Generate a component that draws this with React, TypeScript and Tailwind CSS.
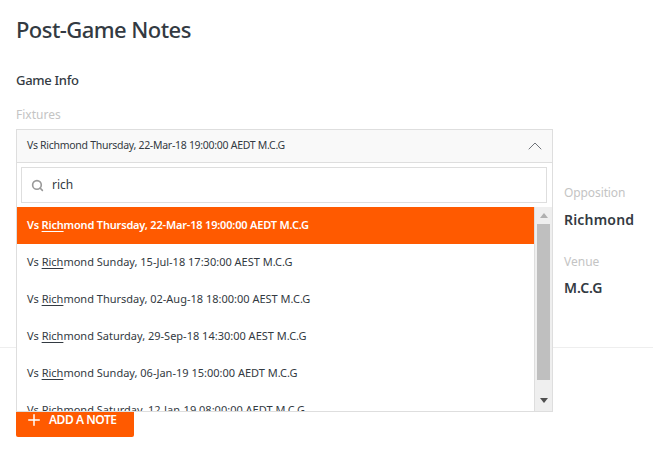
import React from 'react'
import { ChevronUp, Search, Plus } from 'lucide-react'

const fixtures = [
  ' Thursday, 22-Mar-18 19:00:00 AEDT M.C.G',
  ' Sunday, 15-Jul-18 17:30:00 AEST M.C.G',
  ' Thursday, 02-Aug-18 18:00:00 AEST M.C.G',
  ' Saturday, 29-Sep-18 14:30:00 AEST M.C.G',
  ' Sunday, 06-Jan-19 15:00:00 AEDT M.C.G',
  ' Saturday, 12-Jan-19 08:00:00 AEDT M.C.G',
]

const App: React.FC = () => {
  return (
    <div className="w-[653px] h-[455px] overflow-hidden bg-white font-['Noto_Sans',sans-serif] text-[#333a42]">
      <div className="px-4 pt-[13px]">
        <h1 className="text-[22px] leading-[32px] font-medium tracking-[-0.55px]">Post-Game Notes</h1>
        <h2 className="mt-[26px] text-[13px] leading-[18px] font-medium tracking-[-0.3px]">Game Info</h2>
        <div className="mt-[18px] text-[12px] leading-[16px] text-[#c4c4c4]">Fixtures</div>

        <div className="relative mt-[6px] flex">
          <div className="w-[537px] shrink-0">
            <div className="h-[34px] flex items-center justify-between border border-[#dedede] bg-[#f9f9f9] pl-[10px] pr-[5px]">
              <span className="text-[10.5px] tracking-[-0.28px]">Vs Richmond Thursday, 22-Mar-18 19:00:00 AEDT M.C.G</span>
              <ChevronUp className="w-[24px] h-[24px]" strokeWidth={0.7} />
            </div>
          </div>

          <div className="ml-[11px] pt-[56px]">
            <div className="text-[12px] leading-[16px] text-[#c4c4c4] tracking-[-0.1px]">Opposition</div>
            <div className="mt-[9px] text-[14px] leading-[20px] font-semibold tracking-[0.2px]">Richmond</div>
            <div className="mt-[24px] text-[12px] leading-[16px] text-[#c4c4c4]">Venue</div>
            <div className="mt-[8px] text-[14px] leading-[20px] font-semibold">M.C.G</div>
          </div>

          {/* open dropdown sits over the form */}
          <div className="absolute left-0 top-[33px] w-[537px] h-[250px] border border-[#dedede] bg-white overflow-hidden flex flex-col">
            <div className="pl-[4px] pr-[5px] pt-[4px] pb-[4px]">
              <div className="h-[36px] flex items-center border border-[#dedede] pl-[9px]">
                <Search className="w-[13px] h-[13px] text-[#999999]" strokeWidth={3} />
                <span className="ml-[8px] text-[12px]">rich</span>
              </div>
            </div>
            <div className="flex flex-1 overflow-hidden">
              <div className="flex-1 overflow-hidden border-r border-[#dedede]">
                {fixtures.map((f, i) => (
                  <div
                    key={f}
                    className={
                      i === 0
                        ? 'h-[37px] shrink-0 flex items-center pl-[10px] bg-[#ff5a00] text-white font-semibold text-[11px] tracking-[-0.18px] whitespace-pre'
                        : 'h-[37px] shrink-0 flex items-center pl-[10px] text-[11px] whitespace-pre'
                    }
                  >
                    Vs <span className="underline underline-offset-2">Rich</span>mond{f}
                  </div>
                ))}
              </div>
              <div className="w-[17px] shrink-0 bg-[#efefef] flex flex-col items-center">
                <svg className="mt-[6px] w-[8px] h-[5px]" viewBox="0 0 8 5"><path d="M4 0l4 5H0z" fill="#b0b0b0" /></svg>
                <div className="mt-[6px] w-[13px] h-[156px] bg-[#bfbfbf]" />
                <svg className="mt-[18px] w-[8px] h-[5px]" viewBox="0 0 8 5"><path d="M0 0h8L4 5z" fill="#505050" /></svg>
              </div>
            </div>
          </div>
        </div>
      </div>

      <div className="mt-[49px] h-px bg-[#eeeeee]" />

      <div className="px-4 mt-[52px]">
        <button className="w-[118px] h-[37px] rounded-[2px] bg-[#ff5a00] text-white flex items-center pl-[9px] pt-[3px] text-[12px] font-semibold tracking-[-0.45px]">
          <Plus className="w-[18px] h-[18px] mr-[6px]" strokeWidth={2} />
          ADD A NOTE
        </button>
      </div>
    </div>
  )
}

export default App
